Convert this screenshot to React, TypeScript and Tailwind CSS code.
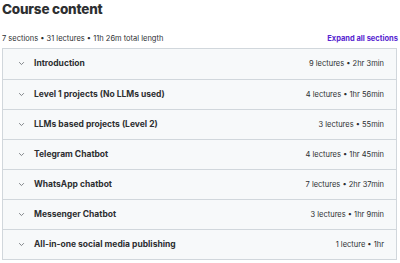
import React from 'react';

const sections = [
  { title: 'Introduction', meta: '9 lectures • 2hr 3min' },
  { title: 'Level 1 projects (No LLMs used)', meta: '4 lectures • 1hr 56min' },
  { title: 'LLMs based projects (Level 2)', meta: '3 lectures • 55min' },
  { title: 'Telegram Chatbot', meta: '4 lectures • 1hr 45min' },
  { title: 'WhatsApp chatbot', meta: '7 lectures • 2hr 37min' },
  { title: 'Messenger Chatbot', meta: '3 lectures • 1hr 9min' },
  { title: 'All-in-one social media publishing', meta: '1 lecture • 1hr' },
];

const Chevron = () => (
  <svg width="7" height="7" viewBox="0 0 10 10" fill="none" className="shrink-0">
    <path d="M2 3.5 L5 6.5 L8 3.5" stroke="#6a6f73" strokeWidth="1.2" strokeLinecap="round" strokeLinejoin="round" />
  </svg>
);

const App: React.FC = () => {
  return (
    <div className="w-[400px] h-[263px] bg-white px-[2px] text-[#2d2f31]" style={{ fontFamily: 'Inter, "Noto Sans", sans-serif' }}>
      <h2 className="text-[13.5px] font-extrabold leading-none pt-[3px] tracking-[-0.2px]">Course content</h2>

      <div className="flex items-end justify-between mt-[16px] mb-[4px]">
        <span className="text-[7.5px] text-[#2d2f31]">7 sections • 31 lectures • 11h 26m total length</span>
        <span className="text-[7.5px] font-bold text-[#5624d0]">Expand all sections</span>
      </div>

      <div className="border border-[#d1d7dc] w-[395px]">
        {sections.map((s, i) => (
          <div
            key={s.title}
            className={`flex items-center justify-between h-[30px] bg-[#f7f9fa] pl-[15px] pr-[12px] ${i > 0 ? 'border-t border-[#d1d7dc]' : ''}`}
          >
            <div className="flex items-center gap-[9px]">
              <Chevron />
              <span className="text-[8.5px] font-bold">{s.title}</span>
            </div>
            <span className="text-[7.5px] text-[#2d2f31]">{s.meta}</span>
          </div>
        ))}
      </div>
    </div>
  );
};

export default App;
